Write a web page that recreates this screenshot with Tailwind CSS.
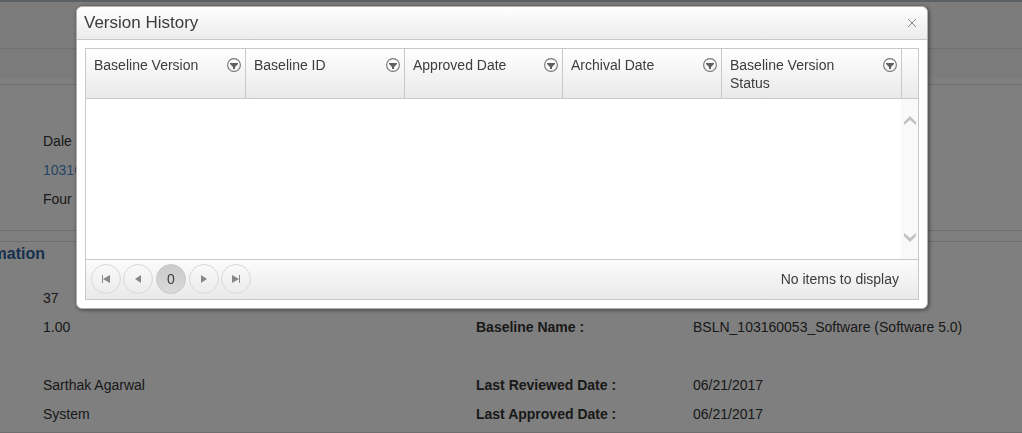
<!DOCTYPE html>
<html lang="en">
<head>
  <meta charset="UTF-8">
  <meta name="viewport" content="width=device-width, initial-scale=1.0">
  <title>Version History</title>
  <script src="https://cdn.jsdelivr.net/npm/@tailwindcss/browser@4"></script>
</head>
<body class="bg-white font-['Liberation_Sans',Arial,sans-serif] text-sm text-[#333] overflow-hidden">
  <!-- funnel icon shared by the column headers -->
  <svg class="hidden">
    <symbol id="filter" viewBox="0 0 14 14">
      <circle cx="7" cy="7" r="6.4" fill="none" stroke="#777" stroke-width="1.1"/>
      <path d="M3 5h8v1L8 9v2H6V9L3 6z" fill="#606060"/>
    </symbol>
  </svg>

  <!-- page -->
  <header class="h-[49px] border-t-2 border-t-[#b4c0c8] border-b border-b-[#e0e0e0] bg-[#f8f8f8]"></header>
  <div class="h-[30px] bg-[#f6f6f6]"></div>
  <main class="pt-[5px]">
    <section class="border-y border-[#dcdcdc] pt-[42px] pb-4 pl-[43px] leading-[29px]">
      <p>Dale</p>
      <p><a href="#" class="text-[#4a8bd0]">103160053</a></p>
      <p>Four</p>
    </section>
    <section class="mt-2.5 border-y border-[#dcdcdc] pb-[3px]">
      <h2 class="flex justify-end w-[45px] overflow-hidden text-base leading-6 font-bold text-[#30609c]">Information</h2>
      <div class="mt-[18px] pl-[43px] grid grid-cols-[433px_217px_1fr] auto-rows-[29px] leading-[29px]">
        <span class="col-span-3">37</span>
        <span>1.00</span>
        <b>Baseline Name :</b>
        <span>BSLN_103160053_Software (Software 5.0)</span>
        <span class="col-span-3"></span>
        <span>Sarthak Agarwal</span>
        <b>Last Reviewed Date :</b>
        <span>06/21/2017</span>
        <span>System</span>
        <b>Last Approved Date :</b>
        <span>06/21/2017</span>
      </div>
    </section>
  </main>

  <!-- modal -->
  <div class="fixed inset-0 bg-black/50 flex items-start pt-1.5 pl-[76px] pr-[94px]">
    <div role="dialog" aria-labelledby="title" class="flex-1 bg-white border border-[#b0b0b0] rounded-md shadow-[1px_1px_4px_rgba(0,0,0,0.5)] text-[#3c3c3c]">
      <div class="flex items-center justify-between h-[33px] pl-[7px] pr-2.5 rounded-t-md border-b border-[#c8c8c8] bg-linear-to-b from-white to-[#ebebeb]">
        <h1 id="title" class="text-[17px] leading-6">Version History</h1>
        <button aria-label="Close">
          <svg class="size-2.5" viewBox="0 0 10 10" fill="none" stroke="#888"><path d="M1 1l8 8M9 1L1 9"/></svg>
        </button>
      </div>

      <div class="m-2 border border-[#c8c8c8]">
        <table class="w-full table-fixed border-separate border-spacing-0 text-left">
          <thead>
            <tr class="h-[50px] align-top bg-linear-to-b from-white to-[#e9e9e9] leading-[18px]">
              <th class="w-[160px] border-r border-b border-[#c8c8c8] font-normal pt-[7px] pl-2 pr-1">
                <div class="flex justify-between">Baseline Version <button aria-label="Filter" class="size-[14px] mt-0.5"><svg class="size-[14px]"><use href="#filter"/></svg></button></div>
              </th>
              <th class="w-[159px] border-r border-b border-[#c8c8c8] font-normal pt-[7px] pl-2 pr-1">
                <div class="flex justify-between">Baseline ID <button aria-label="Filter" class="size-[14px] mt-0.5"><svg class="size-[14px]"><use href="#filter"/></svg></button></div>
              </th>
              <th class="w-[158px] border-r border-b border-[#c8c8c8] font-normal pt-[7px] pl-2 pr-1">
                <div class="flex justify-between">Approved Date <button aria-label="Filter" class="size-[14px] mt-0.5"><svg class="size-[14px]"><use href="#filter"/></svg></button></div>
              </th>
              <th class="w-[159px] border-r border-b border-[#c8c8c8] font-normal pt-[7px] pl-2 pr-1">
                <div class="flex justify-between">Archival Date <button aria-label="Filter" class="size-[14px] mt-0.5"><svg class="size-[14px]"><use href="#filter"/></svg></button></div>
              </th>
              <th class="border-r border-b border-[#c8c8c8] font-normal pt-[7px] pl-2 pr-1">
                <div class="flex justify-between"><span>Baseline Version<br>Status</span> <button aria-label="Filter" class="size-[14px] mt-0.5"><svg class="size-[14px]"><use href="#filter"/></svg></button></div>
              </th>
              <td class="w-4 border-b border-[#c8c8c8]"></td>
            </tr>
          </thead>
        </table>

        <div class="flex justify-end h-40">
          <div class="w-[17px] py-4 flex flex-col items-center justify-between bg-[#f9f9f9]">
            <svg class="w-3 h-2.5" viewBox="0 0 12 10" fill="#c1c1c1"><path d="M6 1l6 6v3L6 5 0 10V7z"/></svg>
            <svg class="w-3 h-2.5" viewBox="0 0 12 10" fill="#c1c1c1"><path d="M6 9l6-6V0L6 5 0 0V3z"/></svg>
          </div>
        </div>

        <!-- pager -->
        <div class="flex items-center justify-between h-10 pb-px pl-[5px] pr-[19px] border-t border-[#c8c8c8] bg-linear-to-b from-[#fcfcfc] to-[#e9e9e9]">
          <div class="flex gap-0.5">
            <button aria-label="First page" class="flex items-center justify-center size-[30px] rounded-full border border-[#d8d8d8]">
              <svg class="size-2" viewBox="0 0 8 8" fill="#888"><path d="M0 0h1v8H0zM8 0v8L1 4z"/></svg>
            </button>
            <button aria-label="Previous page" class="flex items-center justify-center size-[30px] rounded-full border border-[#d8d8d8]">
              <svg class="size-2" viewBox="0 0 8 8" fill="#888"><path d="M7 0v8L1 4z"/></svg>
            </button>
            <button class="mx-px size-[30px] rounded-full border border-[#c8c8c8] bg-linear-to-b from-[#cacaca] to-[#dadada]">0</button>
            <button aria-label="Next page" class="flex items-center justify-center size-[30px] rounded-full border border-[#d8d8d8]">
              <svg class="size-2" viewBox="0 0 8 8" fill="#888"><path d="M1 0v8l6-4z"/></svg>
            </button>
            <button aria-label="Last page" class="flex items-center justify-center size-[30px] rounded-full border border-[#d8d8d8]">
              <svg class="size-2" viewBox="0 0 8 8" fill="#888"><path d="M7 0h1v8H7zM0 0v8l7-4z"/></svg>
            </button>
          </div>
          <span>No items to display</span>
        </div>
      </div>
    </div>
  </div>
</body>
</html>
